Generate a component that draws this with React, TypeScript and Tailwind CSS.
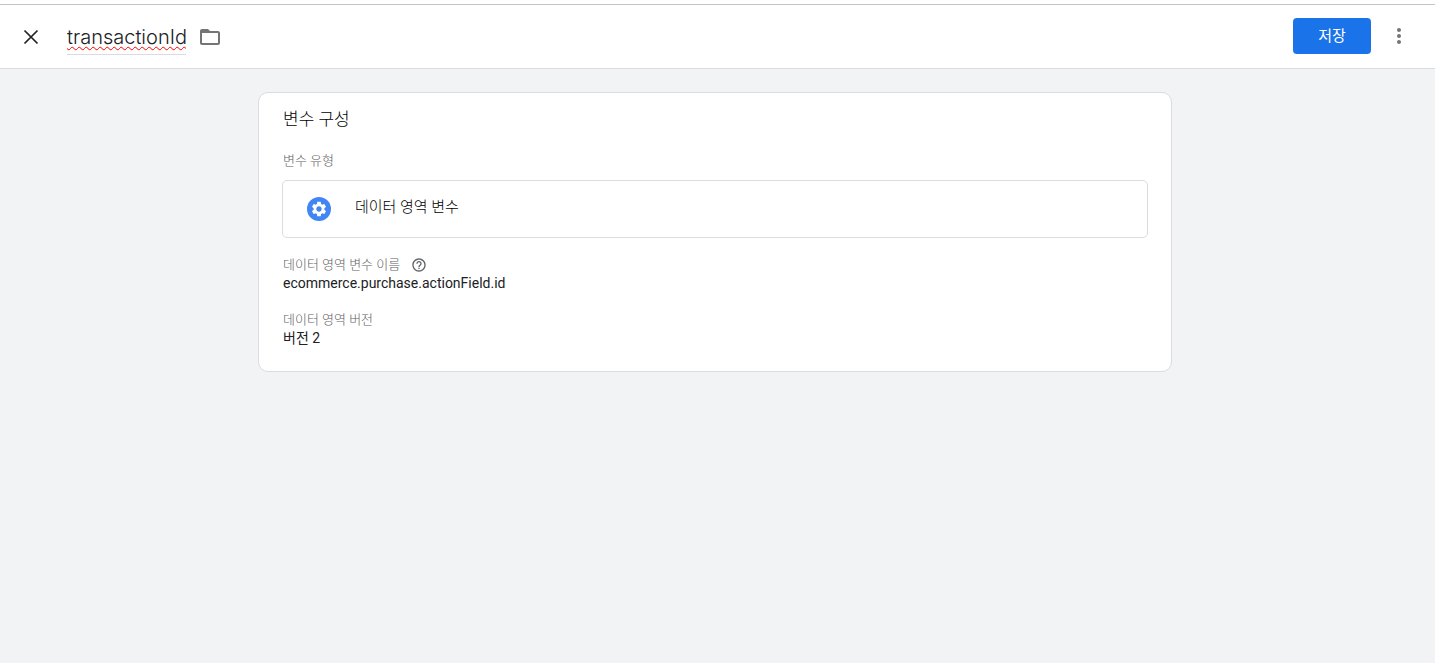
import { useState } from 'react'
import { MdFolderOpen, MdHelpOutline, MdMoreVert, MdSettings } from 'react-icons/md'

function CloseIcon() {
  return (
    <svg width="24" height="24" viewBox="0 0 24 24" fill="none" stroke="currentColor" strokeWidth="1.7">
      <path d="M5.5 5.5l13 13M18.5 5.5l-13 13" />
    </svg>
  )
}

function Header() {
  const [name, setName] = useState('transactionId')

  return (
    <header className="flex h-16 items-center border-b border-[#dadce0] bg-white pl-[19px] pr-6">
      <button type="button" aria-label="닫기" className="text-[#202124]">
        <CloseIcon />
      </button>
      <input
        aria-label="변수 이름"
        value={name}
        spellCheck={false}
        onChange={e => setName(e.target.value)}
        className="ml-6 h-9 w-[119px] border-b border-[#dadce0] pt-0.5 font-['Inter','Noto_Sans_CJK_KR',sans-serif] text-[20px] font-light leading-9 text-[#202124] underline decoration-[#ff0000] decoration-wavy decoration-1 underline-offset-2 outline-none [text-decoration-skip-ink:none]"
      />
      <button type="button" aria-label="폴더" className="ml-3 text-[#757575]">
        <MdFolderOpen size={24} />
      </button>
      <div className="mb-0.5 ml-auto flex items-center gap-4">
        <button
          type="button"
          className="h-9 w-[78px] rounded bg-[#1a73e8] pt-0.5 text-[15px] text-white"
        >
          저장
        </button>
        <button type="button" aria-label="더보기" className="text-[#757575]">
          <MdMoreVert size={24} />
        </button>
      </div>
    </header>
  )
}

function VariableCard() {
  return (
    <section className="mx-auto w-full max-w-[914px] rounded-[10px] border border-[#dadce0] bg-white px-[23px] pb-6 pt-3">
      <h2 className="px-px text-[17px] font-light leading-7 text-black">변수 구성</h2>
      <h3 className="mt-[18px] px-px text-[13px] font-light leading-5 text-[#5f5f5f]">변수 유형</h3>
      <button
        type="button"
        className="mt-[9px] flex h-[58px] w-full items-center gap-6 rounded-[5px] border border-[#dadce0] px-6 text-left"
      >
        <span className="flex size-6 items-center justify-center rounded-full bg-[#4285f4] text-white">
          <MdSettings size={18} />
        </span>
        <span className="pb-1 text-[15px] font-light text-black">데이터 영역 변수</span>
      </button>
      <dl className="mt-[18px] px-px text-sm leading-[18px] text-[#202124]">
        <dt className="flex items-center gap-[11px] text-[13px] font-light leading-[18px] text-[#5f5f5f]">
          데이터 영역 변수 이름
          <MdHelpOutline size={16} className="text-[#5f6368]" />
        </dt>
        <dd>ecommerce.purchase.actionField.id</dd>
        <dt className="mt-[19px] text-[13px] font-light leading-[18px] text-[#5f5f5f]">데이터 영역 버전</dt>
        <dd>버전 2</dd>
      </dl>
    </section>
  )
}

export default function App() {
  return (
    <div className="flex min-h-screen flex-col bg-[#f1f3f4] font-['Roboto','Noto_Sans_CJK_KR',sans-serif]">
      <div className="h-[5px] border-b border-[#c4c4c4] bg-white" />
      <Header />
      <main className="pl-6 pr-[29px] pt-[23px]">
        <VariableCard />
      </main>
    </div>
  )
}
